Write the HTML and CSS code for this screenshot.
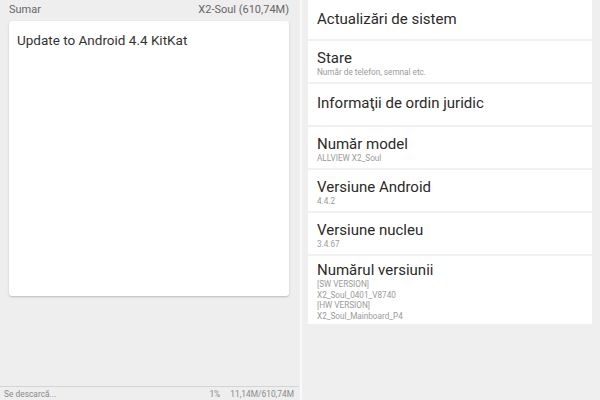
FILE: index.html
```html
<!DOCTYPE html>
<html>
<head>
<meta charset="utf-8">
<link rel="stylesheet" href="styles.css">
</head>
<body>
<div class="screen">
  <div class="left">
    <div class="head">
      <span>Sumar</span>
      <span>X2-Soul (610,74M)</span>
    </div>
    <div class="card"><span class="note">Update to Android 4.4 KitKat</span></div>
    <div class="fill"></div>
    <div class="status">
      <span class="st-label">Se descarcă...</span>
      <span class="st-pct">1%</span>
      <span class="st-size">11,14M/610,74M</span>
    </div>
  </div>
  <div class="divider"></div>
  <div class="right">
    <div class="list">
      <div class="row r1"><div class="title">Actualizări de sistem</div></div>
      <div class="row r2"><div class="title">Stare</div><div class="sub">Număr de telefon, semnal etc.</div></div>
      <div class="row r3"><div class="title">Informaţii de ordin juridic</div></div>
      <div class="row r2"><div class="title">Număr model</div><div class="sub">ALLVIEW X2_Soul</div></div>
      <div class="row r2"><div class="title">Versiune Android</div><div class="sub">4.4.2</div></div>
      <div class="row r2"><div class="title">Versiune nucleu</div><div class="sub">3.4.67</div></div>
      <div class="row r7"><div class="title">Numărul versiunii</div><div class="sub multi">[SW VERSION]<br>X2_Soul_0401_V8740<br>[HW VERSION]<br>X2_Soul_Mainboard_P4</div></div>
    </div>
  </div>
</div>
</body>
</html>
```
FILE: styles.css
```css
* { box-sizing: border-box; }
html, body { margin: 0; padding: 0; }
body {
  width: 600px;
  height: 400px;
  overflow: hidden;
  font-family: Roboto, "Liberation Sans", sans-serif;
  background: #efefef;
}
.screen {
  display: flex;
  width: 600px;
  height: 400px;
}
.left {
  width: 300px;
  background: #eeeeee;
  display: flex;
  flex-direction: column;
}
.head {
  display: flex;
  justify-content: space-between;
  padding: 3px 11px 0 9px;
  height: 21px;
  font-size: 11px;
  color: #666;
}
.card {
  margin: 0 11px 0 9px;
  height: 275px;
  background: #fff;
  border-radius: 3px;
  box-shadow: 0 1px 2px rgba(0,0,0,0.22);
  padding: 10px 8px;
  font-size: 13.5px;
  line-height: 18px;
  color: #333;
}
.note {
  white-space: nowrap;
}
.fill { flex: 1; }
.status {
  display: flex;
  align-items: center;
  height: 14px;
  border-top: 1px solid #d4d4d4;
  margin-right: 1px;
  padding: 0 5px 0 4px;
  font-size: 8.4px;
  color: #8a8a8a;
}
.st-label { flex: 1; }
.st-pct { margin-right: 10px; }
.divider {
  width: 2px;
  background: #f9f9f9;
}
.right {
  flex: 1;
  background: #efefef;
  padding: 0 8px 0 6px;
}
.list {
  background: #fff;
}
.row {
  padding: 0 9px;
  border-top: 2px solid #f1f1f1;
}
.row.r1 { border-top: none; padding-top: 10px; padding-bottom: 11px; }
.row.r2 { padding-top: 8px; padding-bottom: 4px; }
.row.r3 { padding-top: 10px; padding-bottom: 13px; }
.row.r7 { padding-top: 5px; padding-bottom: 3px; }
.title {
  font-size: 15px;
  line-height: 18px;
  color: #2a2a2a;
}
.sub {
  font-size: 8.2px;
  line-height: 11px;
  color: #9a9a9a;
}
.sub.multi { line-height: 10.5px; }
```
